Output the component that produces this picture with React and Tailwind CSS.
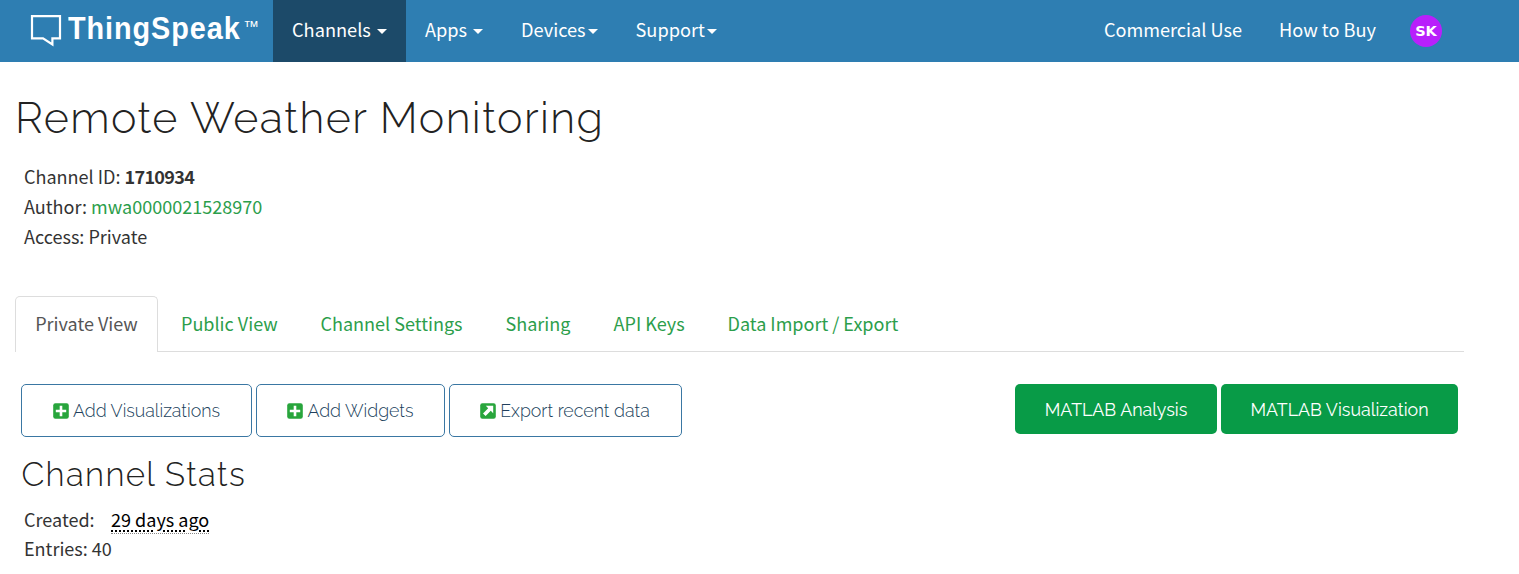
import React from "react";

function Caret({ className = "" }) {
  return (
    <svg className={`h-[5px] w-[10px] shrink-0 ${className}`} viewBox="0 0 10 5" fill="currentColor">
      <path d="M0 0h10L5 5z" />
    </svg>
  );
}

function NavItem({ label, className, caretClass }) {
  return (
    <a className={`flex items-center whitespace-nowrap ${className}`}>
      <span className="pb-1 leading-[58px]">{label}</span>
      <Caret className={caretClass} />
    </a>
  );
}

function Logo() {
  return (
    <div className="flex w-[273px] items-start pl-[30px]">
      <svg className="mt-[15px] h-8 w-8 shrink-0" viewBox="0 0 32 32" fill="none" stroke="#fff" strokeWidth="2.2">
        <path d="M2 1.1h28v22.3h-7.6v6.1L13 23.4H2z" />
      </svg>
      <span className="ml-[6px] mt-3 w-[175px] origin-left scale-x-[0.93] whitespace-nowrap font-['Liberation_Sans',sans-serif] text-[31px] font-bold leading-[34px] tracking-[1px]">
        ThingSpeak
      </span>
      <span className="mt-[18px] font-['Liberation_Sans',sans-serif] text-[16px] leading-[17px]">™</span>
    </div>
  );
}

function PlusSquare() {
  return (
    <svg className="h-4 w-4 shrink-0" viewBox="0 0 16 16">
      <rect x="0.2" y="0.2" width="15.6" height="15.6" rx="2.2" fill="#28a53c" />
      <path d="M8 2.8v10.4M2.8 8h10.4" stroke="#fff" strokeWidth="2.6" />
    </svg>
  );
}

function ExportSquare() {
  return (
    <svg className="h-4 w-4 shrink-0" viewBox="0 0 16 16">
      <rect x="0.2" y="0.2" width="15.6" height="15.6" rx="2.2" fill="#28a53c" />
      <path d="M5.8 2.8h7.4v7.4l-2.4-2.4-5.2 5.2-2.6-2.6 5.2-5.2z" fill="#fff" />
    </svg>
  );
}

function OutlineButton({ icon, label, className }) {
  return (
    <button className={`flex h-[53px] items-center justify-center gap-1 whitespace-nowrap rounded-[5px] border border-[#3a77a3] text-[#213f5c] ${className}`}>
      {icon}
      <span className="pt-[2px]">{label}</span>
    </button>
  );
}

const tabs = [
  { label: "Public View", className: "ml-[23px] w-[139.5px]" },
  { label: "Channel Settings", className: "w-[185px]" },
  { label: "Sharing", className: "w-[108px]" },
  { label: "API Keys", className: "w-[114px]" },
  { label: "Data Import / Export", className: "" },
];

export default function App() {
  return (
    <div className="h-[574px] w-full overflow-hidden bg-white font-['Noto_Sans_CJK_SC',sans-serif] text-[18.05px] text-[#333]">
      <header className="flex h-[62px] bg-[#2e7eb2] text-[18.2px] text-white">
        <Logo />
        <nav className="flex">
          <NavItem label="Channels" className="w-[133px] bg-[#1c4a69] pl-[19px]" caretClass="ml-[6px]" />
          <NavItem label="Apps" className="w-[95px] pl-[19px]" caretClass="ml-[6px]" />
          <NavItem label="Devices" className="w-[115px] pl-[20px]" caretClass="ml-[2px]" />
          <NavItem label="Support" className="pl-[19.5px]" caretClass="ml-[2px]" />
        </nav>
        <div className="ml-auto flex whitespace-nowrap pr-[77px] leading-[58px]">
          <a className="w-[175px] text-[18.1px]">Commercial Use</a>
          <a className="w-[131px]">How to Buy</a>
          <div className="mt-[15px] flex h-8 w-8 items-center justify-center rounded-full bg-[#b820fb] font-['DejaVu_Sans',sans-serif] text-[14.5px] font-bold leading-none">
            SK
          </div>
        </div>
      </header>

      <main className="ml-[15px] w-[1449px]">
        <h1 className="mt-[31px] whitespace-nowrap font-[Raleway,Lato,sans-serif] text-[43px] font-light leading-[50px] tracking-[1.45px] text-[#222]">
          Remote Weather Monitoring
        </h1>
        <div className="mt-[18px] pl-[9px] leading-[30px]">
          <div>Channel ID: <b className="tracking-[-0.7px]">1710934</b></div>
          <div>Author: <a className="text-[#2c9e4b]">mwa0000021528970</a></div>
          <div>Access: Private</div>
        </div>

        <div className="mt-[45px] flex h-14 border-b border-[#ddd] leading-[53px] text-[#2c9e4b]">
          <a className="h-14 w-[143px] rounded-t-[5px] border border-b-0 border-[#ddd] bg-white text-center text-[#555]">Private View</a>
          {tabs.map((t) => (
            <a key={t.label} className={`whitespace-nowrap pt-px ${t.className}`}>{t.label}</a>
          ))}
        </div>

        <div className="mt-8 flex items-start px-[6px] font-[Raleway,Lato,sans-serif] text-[17.8px]">
          <div className="flex gap-1 font-light">
            <OutlineButton icon={<PlusSquare />} label="Add Visualizations" className="w-[231px]" />
            <OutlineButton icon={<PlusSquare />} label="Add Widgets" className="w-[189px]" />
            <OutlineButton icon={<ExportSquare />} label="Export recent data" className="w-[233px] pr-px" />
          </div>
          <div className="ml-auto flex gap-1 text-white">
            <button className="h-[50px] w-[202px] whitespace-nowrap rounded-[5px] bg-[#089b47] pt-[2px]">MATLAB Analysis</button>
            <button className="h-[50px] w-[237px] whitespace-nowrap rounded-[5px] bg-[#089b47] pt-[2px]">MATLAB Visualization</button>
          </div>
        </div>

        <h2 className="mt-[18px] pl-[6.5px] font-[Raleway,Lato,sans-serif] text-[33px] font-light leading-10 tracking-[1.35px] text-[#222]">Channel Stats</h2>
        <div className="mt-[10px] pl-[9px] leading-[29px]">
          <div className="flex">
            <span className="w-[87px]">Created:</span>
            <span className="flex h-[29px] items-start text-black underline decoration-dotted decoration-2 underline-offset-[3px]">
              <span className="h-[29px] border-b border-dotted border-[#888]">29 days ago</span>
            </span>
          </div>
          <div>Entries: 40</div>
        </div>
      </main>
    </div>
  );
}
